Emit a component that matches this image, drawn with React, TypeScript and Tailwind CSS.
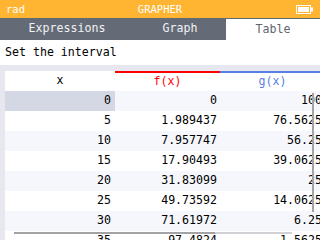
import React from "react";

const rows = [
    {x: "0", f: "0", g: "100"},
    {x: "5", f: "1.989437", g: "76.5625"},
    {x: "10", f: "7.957747", g: "56.25"},
    {x: "15", f: "17.90493", g: "39.0625"},
    {x: "20", f: "31.83099", g: "25"},
    {x: "25", f: "49.73592", g: "14.0625"},
    {x: "30", f: "71.61972", g: "6.25"},
    {x: "35", f: "97.4824", g: "1.5625"},
];

const Battery = (): React.JSX.Element => (
    <svg width="17" height="9" viewBox="0 0 17 9" className="block">
        <rect x="0.5" y="0.5" width="14" height="8" fill="none" stroke="#fff" strokeWidth="1"/>
        <rect x="2" y="2" width="11" height="5" fill="#fff"/>
        <rect x="15" y="2.5" width="2" height="4" fill="#fff"/>
    </svg>
);

const App = (): React.JSX.Element => {
    return (
        <div
            className="w-[320px] h-[240px] overflow-hidden flex flex-col bg-white text-[11.6px] leading-none"
            style={{fontFamily: '"DejaVu Sans Mono", "Liberation Mono", monospace'}}
        >
            {/* status bar */}
            <div className="h-[18px] shrink-0 bg-[#ffb531] text-white text-[10.5px] grid grid-cols-3 items-center px-[6px]">
                <span>rad</span>
                <span className="text-center">GRAPHER</span>
                <div className="flex justify-end pr-[1px]">
                    <Battery/>
                </div>
            </div>

            {/* tabs */}
            <div className="h-[22px] shrink-0 flex bg-[#646b77] text-[#f2f2f4]">
                <div className="w-[134px] flex items-center justify-center">Expressions</div>
                <div className="w-[92px] flex items-center justify-center">Graph</div>
                <div className="flex-1 flex items-center justify-center bg-white text-[#5e6570] border-t border-[#646b77]">
                    Table
                </div>
            </div>

            <div className="h-[25px] shrink-0 flex items-center pl-[5px] pt-[1px] text-black">
                Set the interval
            </div>

            {/* table */}
            <div className="relative flex-1 bg-[#e7e7ef] pt-[6px] pl-[5px] overflow-hidden">
                <div className="grid grid-cols-[110px_105px_105px] auto-rows-[20px] w-[325px]">
                    <div className="bg-white flex items-center justify-center text-black">x</div>
                    <div className="bg-white flex items-center justify-center text-[#ff0000] border-t-2 border-[#ff0000]">
                        f(x)
                    </div>
                    <div className="bg-white flex items-center justify-center text-[#5a7fe4] border-t-2 border-[#5a7fe4]">
                        g(x)
                    </div>
                    {rows.map((row, i) => {
                        const bg = i % 2 === 0 ? "bg-[#f5f7fc]" : "bg-white";
                        return (
                            <React.Fragment key={row.x}>
                                <div className={`flex items-center justify-end pr-[4px] text-black ${i === 0 ? "bg-[#d4d7e4]" : bg}`}>
                                    {row.x}
                                </div>
                                <div className={`flex items-center justify-end pr-[3px] text-black ${bg}`}>{row.f}</div>
                                <div className={`flex items-center justify-end pr-[3px] text-black ${bg}`}>{row.g}</div>
                            </React.Fragment>
                        );
                    })}
                </div>

                {/* scrollbars */}
                <div className="absolute left-[312px] top-[28px] w-[2px] h-[119px] bg-[#a3a3a6]"/>
                <div className="absolute left-[14px] top-[167px] w-[278px] h-[2px] bg-[#d0d0d5]">
                    <div className="w-[201px] h-full bg-[#a3a3a6]"/>
                </div>
            </div>
        </div>
    );
};

export default App;
